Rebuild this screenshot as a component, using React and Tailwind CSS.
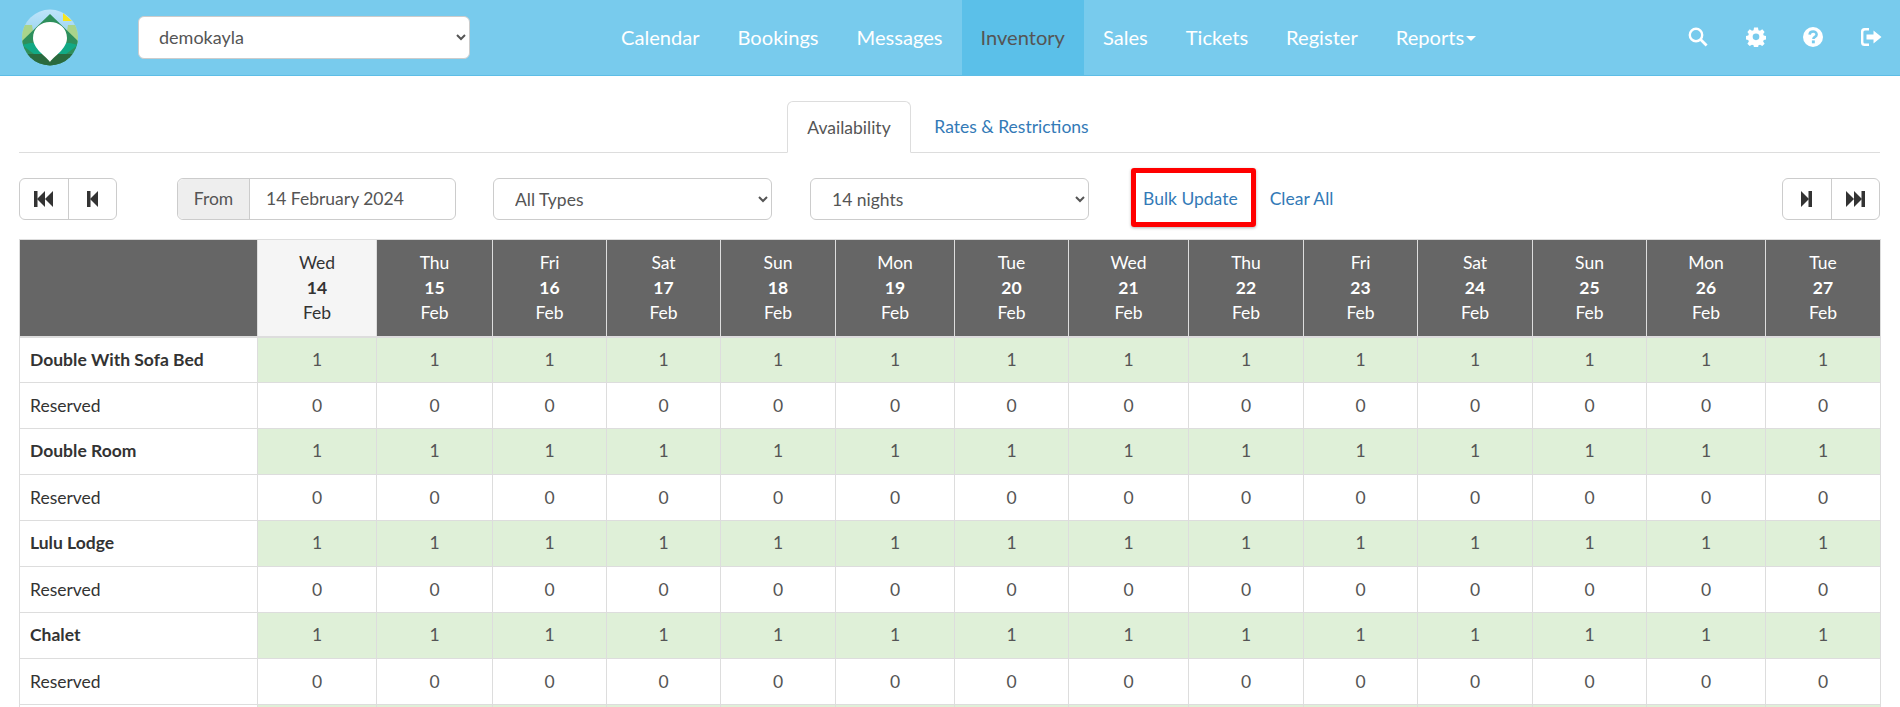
import React from "react";

const navItems = ["Calendar", "Bookings", "Messages", "Inventory", "Sales", "Tickets", "Register", "Reports"];
const rooms = ["Double With Sofa Bed", "Double Room", "Lulu Lodge", "Chalet"];
const days = [
  ["Wed", 14], ["Thu", 15], ["Fri", 16], ["Sat", 17], ["Sun", 18], ["Mon", 19], ["Tue", 20],
  ["Wed", 21], ["Thu", 22], ["Fri", 23], ["Sat", 24], ["Sun", 25], ["Mon", 26], ["Tue", 27],
];
const colWidths = [
  "w-[119px]", "w-[116px]", "w-[114px]", "w-[114px]", "w-[115px]", "w-[119px]", "w-[114px]",
  "w-[120px]", "w-[115px]", "w-[114px]", "w-[115px]", "w-[114px]", "w-[119px]", "w-[115px]",
];

const Logo = () => (
  <svg width="56" height="57" viewBox="0 0 56 57" className="shrink-0">
    <defs>
      <clipPath id="logoClip">
        <circle cx="28" cy="28.5" r="28" />
      </clipPath>
      <linearGradient id="logoSky" x1="0" y1="0" x2="0" y2="1">
        <stop offset="0" stopColor="#bfe4fa" />
        <stop offset="0.6" stopColor="#8fd0ee" />
      </linearGradient>
    </defs>
    <g clipPath="url(#logoClip)">
      <rect width="56" height="57" fill="url(#logoSky)" />
      <path d="M0 16 L10 16 L14 40 L0 36Z M56 16 L46 16 L42 40 L56 36Z" fill="#a9d48b" />
      <path d="M28 5 L56 32 L56 57 L0 57 L0 32Z" fill="#2e8f5c" />
      <path d="M8 34 L48 34 L56 36 L40 48 L16 48 L0 36Z" fill="#12a985" />
      <path d="M0 45 L56 45 L56 57 L0 57Z" fill="#2a6a3e" />
      <path d="M41 4 L50 12 L41 12Z" fill="#f7e51c" />
      <path d="M28 53 C24 47 11 40 11 29 C11 19 19 13 28 13 C37 13 45 19 45 29 C45 40 32 47 28 53Z" fill="#fff" />
    </g>
  </svg>
);

const SearchIcon = () => (
  <svg width="20" height="20" viewBox="0 0 20 20" fill="none" stroke="#fff" className="mr-px">
    <circle cx="8" cy="8" r="6.2" strokeWidth="2.4" />
    <path d="M12.6 12.6 L18.6 18.6" strokeWidth="2.8" />
  </svg>
);

const GearIcon = () => (
  <svg width="20" height="20" viewBox="0 0 20 20" fill="#fff">
    <path
      fillRule="evenodd"
      d="M8 0.5 h4 l0.5 2.7 l1.6 0.7 l2.3 -1.5 l2.4 2.6 l-1.5 2.2 l0.6 1.6 l2.6 0.5 v3.4 l-2.6 0.5 l-0.6 1.6 l1.5 2.2 l-2.4 2.5 l-2.3 -1.5 l-1.6 0.7 l-0.5 2.7 h-4 l-0.5 -2.7 l-1.6 -0.7 l-2.3 1.5 l-2.4 -2.5 l1.5 -2.2 l-0.6 -1.6 l-2.6 -0.5 v-3.4 l2.6 -0.5 l0.6 -1.6 l-1.5 -2.2 l2.4 -2.6 l2.3 1.5 l1.6 -0.7Z M10 6.6 a3.4 3.4 0 1 0 0 6.8 a3.4 3.4 0 1 0 0 -6.8Z"
      transform="translate(0.2 0) scale(0.98)"
    />
  </svg>
);

const HelpIcon = () => (
  <svg width="20" height="20" viewBox="0 0 20 20">
    <circle cx="10" cy="10" r="10" fill="#fff" />
    <path d="M6.6 7.6 C6.8 3.6 13.6 3.6 13.6 7.4 C13.6 10 10.4 9.6 10.4 12" fill="none" stroke="#78cbed" strokeWidth="2.6" />
    <rect x="8.9" y="13.4" width="2.9" height="2.9" fill="#78cbed" />
  </svg>
);

const LogoutIcon = () => (
  <svg width="22" height="20" viewBox="0 0 22 20" fill="#fff">
    <path d="M9 1 H4.5 A3.5 3.5 0 0 0 1 4.5 V15.5 A3.5 3.5 0 0 0 4.5 19 H9 V16.6 H5 A1.6 1.6 0 0 1 3.4 15 V5 A1.6 1.6 0 0 1 5 3.4 H9Z" />
    <path d="M6.5 7.5 H13.5 V3.5 L21.5 10 L13.5 16.5 V12.5 H6.5Z" />
  </svg>
);

// drawn pointing right, mirrored for the back buttons
const StepIcon = ({ double, flip }) =>
  double ? (
    <svg width="19" height="16" viewBox="0 0 19 16" fill="#333" className={flip ? "-scale-x-100" : ""}>
      <path d="M0 0 L8 8 L0 16Z" />
      <path d="M8 0 L16 8 L8 16Z" />
      <rect x="15.5" y="0" width="3.5" height="16" />
    </svg>
  ) : (
    <svg width="11" height="16" viewBox="0 0 11 16" fill="#333" className={flip ? "-scale-x-100" : ""}>
      <path d="M0 0 L8 8 L0 16Z" />
      <rect x="7.5" y="0" width="3.5" height="16" />
    </svg>
  );

const PagerButtons = ({ forward }) => (
  <div className="flex h-[42px] w-[98px] shrink-0 rounded-[6px] border border-[#ccc]">
    <button className="flex flex-1 items-center justify-center border-r border-[#ccc]">
      <StepIcon double={!forward} flip={!forward} />
    </button>
    <button className="flex flex-1 items-center justify-center">
      <StepIcon double={forward} flip={!forward} />
    </button>
  </div>
);

const Navbar = () => (
  <header className="flex h-[76px] items-stretch border-b border-[#5dbde6] bg-[#78cbed]">
    <div className="ml-[22px] flex items-center pb-px">
      <Logo />
    </div>
    <div className="ml-[60px] flex items-center pb-[1px]">
      <select className="h-[43px] w-[332px] rounded-[6px] border border-[#ccc] bg-white pl-[16px] text-[18px] text-[#555]">
        <option>demokayla</option>
      </select>
    </div>
    <nav className="ml-[132px] flex">
      {navItems.map((item) => (
        <a
          key={item}
          href="#"
          className={
            item === "Inventory"
              ? "flex items-center bg-[#5bc0e9] px-[19px] pb-px text-[20.1px] text-[#555]"
              : "flex items-center px-[19px] pb-px text-[20.1px] text-white"
          }
        >
          {item}
          {item === "Reports" && <span className="mt-[2px] ml-[2px] h-0 w-0 border-x-[5px] border-t-[5px] border-x-transparent border-t-white" />}
        </a>
      ))}
    </nav>
    <div className="ml-auto mr-[18px] flex items-center gap-[37px] pb-[1px]">
      <SearchIcon />
      <GearIcon />
      <HelpIcon />
      <LogoutIcon />
    </div>
  </header>
);

const Toolbar = () => (
  <div className="mt-[25px] flex items-center">
    <PagerButtons />
    <div className="ml-[60px] flex h-[42px] w-[279px] rounded-[6px] border border-[#ccc]">
      <span className="flex w-[72px] items-center justify-center rounded-l-[6px] border-r border-[#ccc] bg-[#eee]">From</span>
      <span className="flex flex-1 items-center pl-[16px]">14 February 2024</span>
    </div>
    <select className="ml-[37px] h-[42px] w-[279px] rounded-[6px] border border-[#ccc] bg-white pl-[17px]">
      <option>All Types</option>
    </select>
    <select className="ml-[38px] h-[42px] w-[279px] rounded-[6px] border border-[#ccc] bg-white pl-[17px]">
      <option>14 nights</option>
    </select>
    <a href="#" className="relative ml-[54px] text-[#337ab7]">
      Bulk Update
      <span className="absolute -top-[18px] -right-[18px] -bottom-[15px] -left-[12px] rounded-[3px] border-[5px] border-[#f00] shadow-[0_1px_3px_rgba(0,0,0,0.3)]" />
    </a>
    <a href="#" className="ml-[32px] text-[#337ab7]">Clear All</a>
    <div className="ml-auto">
      <PagerButtons forward />
    </div>
  </div>
);

const CalendarTable = () => (
  <table className="mt-[19px] w-[1861px] table-fixed border-collapse">
    <colgroup>
      <col className="w-[238px]" />
      {colWidths.map((w, i) => (
        <col key={i} className={w} />
      ))}
    </colgroup>
    <thead>
      <tr className="h-[97px]">
        <th className="border border-b-2 border-[#ddd] bg-[#666]" />
        {days.map(([name, num], i) => (
          <th
            key={num}
            className={
              i === 0
                ? "border border-b-2 border-[#ddd] bg-[#f5f5f5] font-normal leading-[25px] text-[#333]"
                : "border border-b-2 border-[#ddd] bg-[#666] font-normal leading-[25px] text-white"
            }
          >
            <div>{name}</div>
            <div className="font-bold">{num}</div>
            <div>Feb</div>
          </th>
        ))}
      </tr>
    </thead>
    <tbody>
      {rooms.map((room) => (
        <React.Fragment key={room}>
          <tr className="h-[46px]">
            <td className="border border-[#ddd] pl-[10px] font-bold text-[#333]">{room}</td>
            {days.map(([, num]) => (
              <td key={num} className="border border-[#ddd] bg-[#dff0d8] text-center">1</td>
            ))}
          </tr>
          <tr className="h-[46px]">
            <td className="border border-[#ddd] pl-[10px] pt-[2px] text-[#333]">Reserved</td>
            {days.map(([, num]) => (
              <td key={num} className="border border-[#ddd] pt-[2px] text-center">0</td>
            ))}
          </tr>
        </React.Fragment>
      ))}
      {/* next room starts right at the fold, only its top edge shows */}
      <tr className="h-[46px]">
        <td className="border border-[#ddd]" />
        {days.map(([, num]) => (
          <td key={num} className="border border-[#ddd] bg-[#dff0d8]" />
        ))}
      </tr>
    </tbody>
  </table>
);

const App = () => (
  <div className="h-screen overflow-hidden bg-white font-['Lato','Open_Sans',sans-serif] text-[17.5px] text-[#555]">
    <Navbar />
    <main className="pl-[19px] pr-[20px]">
      <div className="mt-[25px] flex h-[52px] justify-center border-b border-[#ddd] pr-[2px]">
        <a href="#" className="flex h-[52px] w-[124px] items-center justify-center rounded-t-[6px] border border-b-white border-[#ddd] bg-white pt-[2px]">
          Availability
        </a>
        <a href="#" className="ml-[2px] flex w-[197px] items-center justify-center pt-[2px] text-[#337ab7]">
          Rates &amp; Restrictions
        </a>
      </div>
      <Toolbar />
      <CalendarTable />
    </main>
  </div>
);

export default App;
